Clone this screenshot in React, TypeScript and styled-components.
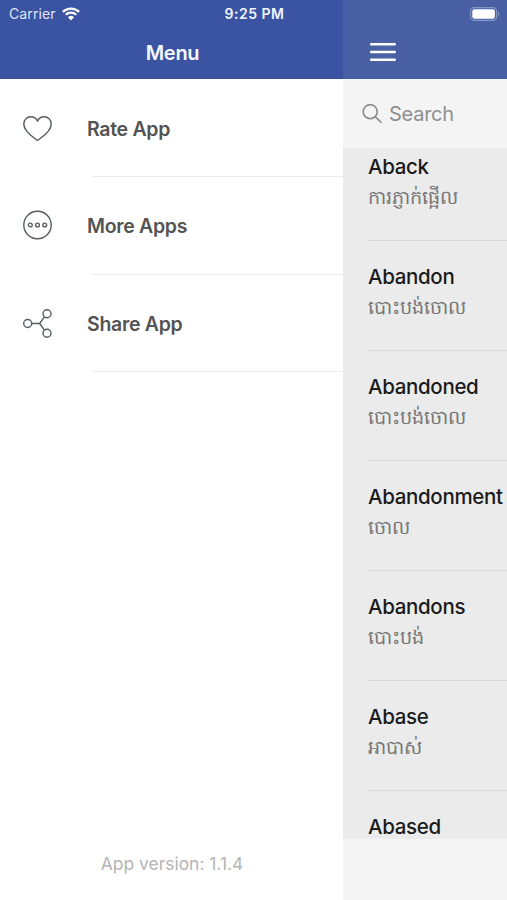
import React from 'react';
import styled, { createGlobalStyle } from 'styled-components';

const GlobalStyle = createGlobalStyle`
  * { box-sizing: border-box; }
  body { margin: 0; background: #fff; font-family: Inter, 'Liberation Sans', sans-serif; }
`;

const Screen = styled.div`
  position: relative;
  display: flex;
  width: 507px;
  height: 900px;
  overflow: hidden;
`;

const StatusBar = styled.div`
  position: absolute;
  top: 0;
  left: 0;
  width: 100%;
  height: 27px;
  padding: 0 7px 0 9px;
  display: grid;
  grid-template-columns: 1fr auto 1fr;
  align-items: center;
  color: #fff;
`;

const Carrier = styled.div`
  display: flex;
  align-items: center;
  gap: 6px;
  font-size: 14px;
  line-height: 27px;
  letter-spacing: 0.12px;
  color: #dfe5f5;
`;

const Clock = styled.div`
  font-size: 14px;
  font-weight: 600;
  letter-spacing: 0.5px;
  color: #f2f5fc;
`;

const Battery = styled.div`
  justify-self: end;
  display: flex;
`;

const Drawer = styled.aside`
  display: flex;
  flex-direction: column;
  flex: 0 0 343px;
  background: #fff;
`;

const TitleBar = styled.header<{ $dimmed?: boolean }>`
  flex: 0 0 79px;
  display: flex;
  align-items: center;
  justify-content: ${(p) => (p.$dimmed ? 'flex-start' : 'center')};
  padding: 26px 0 0 ${(p) => (p.$dimmed ? '27px' : '2px')};
  background: ${(p) => (p.$dimmed ? '#4a60a4' : '#3a54a3')};
  border-bottom: 1px solid ${(p) => (p.$dimmed ? '#4460a8' : '#314c9c')};
`;

const Title = styled.h1`
  margin: 1px 0 0;
  font-size: 20px;
  font-weight: 600;
  letter-spacing: -0.3px;
  color: #f6f8fe;
`;

const Menu = styled.nav`
  display: flex;
  flex-direction: column;
  padding-top: 0.4px;
`;

const MenuRow = styled.div`
  flex: 0 0 97.6px;
  display: flex;
  align-items: center;
  gap: 34px;
  padding-left: 22px;
  background: linear-gradient(#ececee, #ececee) 92px 100% / 251px 1px no-repeat;
`;

const MenuLabel = styled.span`
  font-size: 19.5px;
  font-weight: 600;
  letter-spacing: -0.3px;
  color: #535353;
  margin-top: 1px;
`;

const Version = styled.footer`
  margin-top: auto;
  height: 73px;
  line-height: 73px;
  text-align: center;
  font-size: 17.5px;
  letter-spacing: -0.03px;
  padding-left: 1px;
  color: #b5b5b5;
`;

const Main = styled.main`
  flex: 1;
  min-width: 0;
  display: flex;
  flex-direction: column;
  background: #f4f4f4;
`;

const Search = styled.div`
  flex: 0 0 69px;
  display: flex;
  align-items: center;
  gap: 7px;
  padding-left: 19px;
  font-size: 20px;
  letter-spacing: -0.25px;
  color: #8e8e90;
`;

const WordList = styled.div`
  height: 691px;
  overflow: hidden;
  background: #ebebeb;
`;

const WordRow = styled.div`
  height: 110px;
  margin-left: 25px;
  padding-top: 23px;
  border-bottom: 1px solid #d8d8d8;
  white-space: nowrap;
  &:first-child { height: 93px; padding-top: 6px; }
`;

const Word = styled.div`
  height: 25px;
  line-height: 25px;
  font-size: 20.5px;
  font-weight: 500;
  letter-spacing: -0.34px;
  color: #1b1b1b;
`;

const Meaning = styled.div`
  height: 36px;
  line-height: 36px;
  font-size: 19.2px;
  color: #777;
`;

const WifiIcon = () => (
  <svg width="18" height="14" viewBox="0 0 18 14" fill="none" stroke="#fff" strokeWidth="2.3">
    <path d="M.9 4.9a11.5 11.5 0 0 1 16.2 0M3.8 7.8a7.4 7.4 0 0 1 10.4 0" />
    <path d="M6 10.2a4.3 4.3 0 0 1 6 0L9 13.4z" fill="#fff" stroke="none" />
  </svg>
);

const BatteryIcon = () => (
  <svg width="30" height="14" viewBox="0 0 30 14">
    <rect x=".6" y=".6" width="26" height="12.8" rx="3.8" fill="none" stroke="#8797c8" strokeWidth="1.1" />
    <rect x="2.3" y="2.3" width="22.6" height="9.4" rx="2.2" fill="#fff" />
    <path d="M28 4.8q2 2.2 0 4.4z" fill="#9aa8d0" />
  </svg>
);

const HamburgerIcon = () => (
  <svg width="26" height="20" viewBox="0 0 26 20" fill="none" stroke="#fff" strokeWidth="2.4" strokeLinecap="round">
    <path d="M1.2 2.3h23.6M1.2 10h23.6M1.2 17.7h23.6" />
  </svg>
);

const HeartIcon = () => (
  <svg width="31" height="31" viewBox="0 0 31 31" fill="none" stroke="#555c60" strokeWidth="1.4" strokeLinejoin="round">
    <path d="M15.5 27.5C12 24.5 1.8 19.1 1.8 10.9 1.8 6.7 5 3.7 8.8 3.7c3 0 5.5 1.6 6.7 4.4 1.2-2.8 3.7-4.4 6.7-4.4 3.8 0 7 3 7 7.2C29.2 19.1 19 24.5 15.5 27.5z" />
  </svg>
);

const MoreIcon = () => (
  <svg width="31" height="31" viewBox="0 0 31 31" fill="none" stroke="#555c60" strokeWidth="1.4">
    <circle cx="15.5" cy="15" r="13.7" />
    <circle cx="8.3" cy="15" r="1.9" />
    <circle cx="15.5" cy="15" r="1.9" />
    <circle cx="22.7" cy="15" r="1.9" />
  </svg>
);

const ShareIcon = () => (
  <svg width="31" height="31" viewBox="0 0 31 31" fill="none" stroke="#555c60" strokeWidth="1.4">
    <circle cx="5.7" cy="15.5" r="4" />
    <circle cx="25" cy="5.7" r="4" />
    <circle cx="25" cy="25.2" r="4" />
    <path d="M9.7 15.5h8l4.7-6.7M17.7 15.5l4.7 6.6" />
  </svg>
);

const SearchIcon = () => (
  <svg width="20" height="20" viewBox="0 0 20 20" fill="none" stroke="#8e8e90" strokeWidth="1.7" strokeLinecap="round">
    <circle cx="8.2" cy="7.7" r="7" />
    <path d="M13.4 12.9l5.5 5.3" />
  </svg>
);

const menuItems = [
  { label: 'Rate App', Icon: HeartIcon },
  { label: 'More Apps', Icon: MoreIcon },
  { label: 'Share App', Icon: ShareIcon },
];

const words = [
  ['Aback', 'ការភ្ញាក់ផ្អើល'],
  ['Abandon', 'បោះបង់ចោល'],
  ['Abandoned', 'បោះបង់ចោល'],
  ['Abandonment', 'ចោល'],
  ['Abandons', 'បោះបង់'],
  ['Abase', 'អាបាស់'],
  ['Abased', ''],
];

export default function App() {
  return (
    <Screen>
      <GlobalStyle />
      <Drawer>
        <TitleBar><Title>Menu</Title></TitleBar>
        <Menu>
          {menuItems.map(({ label, Icon }) => (
            <MenuRow key={label}>
              <Icon />
              <MenuLabel>{label}</MenuLabel>
            </MenuRow>
          ))}
        </Menu>
        <Version>App version: 1.1.4</Version>
      </Drawer>
      <Main>
        <TitleBar $dimmed><HamburgerIcon /></TitleBar>
        <Search><SearchIcon />Search</Search>
        <WordList>
          {words.map(([word, meaning]) => (
            <WordRow key={word}>
              <Word>{word}</Word>
              <Meaning lang="km">{meaning}</Meaning>
            </WordRow>
          ))}
        </WordList>
      </Main>
      <StatusBar>
        <Carrier>Carrier<WifiIcon /></Carrier>
        <Clock>9:25 PM</Clock>
        <Battery><BatteryIcon /></Battery>
      </StatusBar>
    </Screen>
  );
}
